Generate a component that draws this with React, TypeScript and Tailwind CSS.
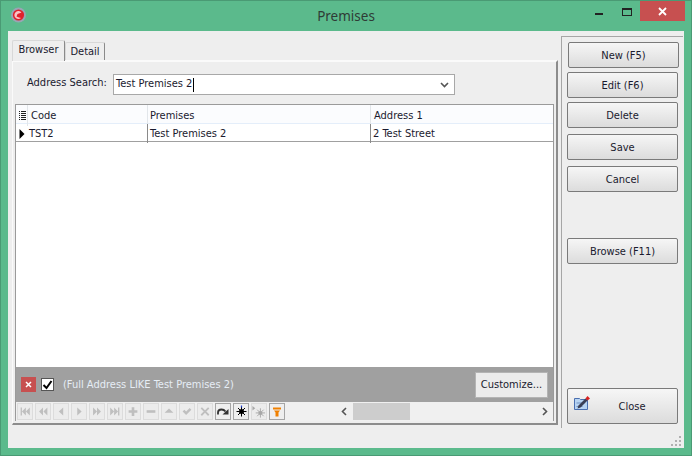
import React from 'react';

const FONT = "font-['DejaVu_Sans_Condensed','Liberation_Sans',sans-serif]";

// Side button, the frame is the same for all of them
const SideButton = ({ label, className = '' }: { label: string; className?: string }) => (
  <div
    className={`flex h-[26px] w-[111px] items-center justify-center rounded-[2px] border border-[#7a7a7a] bg-gradient-to-b from-[#f6f6f6] to-[#dcdcdc] pt-[2px] text-[11px] text-[#1a1a2e] ${className}`}
  >
    {label}
  </div>
);

// Record navigator glyphs, drawn on a 16x17 box
const NAV_ICONS: { d: string }[] = [
  { d: 'M3 4h1.500v9H3z M9 4v9L4.500 8.500z M13.500 4v9L9 8.500z' },
  { d: 'M8 4v9L3.500 8.500z M13 4v9L8.500 8.500z' },
  { d: 'M10.500 4v9L5.500 8.500z' },
  { d: 'M6 4v9l5-4.500z' },
  { d: 'M3.500 4v9L8 8.500z M8 4v9l4.500-4.500z' },
  { d: 'M2.500 4v9L7 8.500z M7 4v9l4.500-4.500z M11.500 4H13v9h-1.500z' },
  { d: 'M6.500 3.500h3v3.500H13v3H9.500v3.500h-3V10H3V7h3.500z' },
  { d: 'M3 7h10v3H3z' },
  { d: 'M8 5l5 5H3z' },
  { d: 'M3 8.500l2-2 2 2 4-4 2 2-6 6z' },
  { d: 'M4.500 3.500L8 7l3.500-3.500 1.500 1.500L9.500 8.500l3.500 3.500-1.500 1.500L8 10l-3.500 3.500L3 12l3.500-3.500L3 5z' },
];

const NavButton = ({ children, active = false }: { children: React.ReactNode; active?: boolean }) => (
  <div
    className={`flex h-[17px] w-[16px] items-center justify-center border ${
      active ? 'border-[#a6a6a6] bg-[#efefef]' : 'border-[#dcdcdc] bg-[#ececec]'
    }`}
  >
    {children}
  </div>
);

export default function App() {
  return (
    <div className={`flex h-[456px] w-[692px] flex-col overflow-hidden border border-[#4a9a74] bg-[#5bba8c] ${FONT}`}>
      {/* Title bar */}
      <div className="relative flex h-[30px] shrink-0 items-center justify-center font-['Noto_Sans',sans-serif] text-[13.5px] text-[#2f3b36]">
        <svg className="absolute left-[9px] top-[6px]" width="17" height="17" viewBox="0 0 17 17">
          <circle cx="8.500" cy="8" r="7.500" fill="#9aa4b4" />
          <circle cx="8.500" cy="8" r="5.600" fill="#e0202c" />
          <path d="M11.500 5.500a4 4 0 1 0-.5 5.500l-2-.5-2.500-1 1-2.500z" fill="#f8c4c4" />
        </svg>
        <span>Premises</span>
        <div className="absolute right-[6px] top-0 flex h-[20px] items-start">
          <div className="mr-[19px] mt-[12px] h-[2px] w-[8px] bg-[#222]" />
          <div className="mr-[8px] mt-[7px] h-[8px] w-[10px] border border-t-[2px] border-[#222]" />
          <div className="flex h-[20px] w-[45px] items-center justify-center bg-[#c75050] text-[#fff]">
            <svg width="9" height="9" viewBox="0 0 9 9">
              <path d="M1 1l7 7M8 1L1 8" stroke="#fff" strokeWidth="1.800" />
            </svg>
          </div>
        </div>
      </div>

      {/* Client area */}
      <div className="relative mx-[7px] flex h-[417px] bg-[#eeeeee] text-[11px] text-[#1a1a2e]">
        {/* Left: tabs and page */}
        <div className="ml-[4px] mt-[9px] flex w-[546px] flex-col">
          <div className="flex h-[20px] items-end">
            <div className="z-10 -mb-[1px] flex h-[21px] w-[53px] items-center justify-center rounded-t-[2px] border border-b-0 border-[#d8d8d8] border-r-[#8a8a8a] bg-[#eeeeee] pb-[2px]">
              Browser
            </div>
            <div className="flex h-[18px] w-[40px] items-center justify-center rounded-t-[2px] border border-b-0 border-[#d8d8d8] border-r-[#8a8a8a] bg-[#eeeeee] pt-[1px]">
              Detail
            </div>
          </div>

          <div className="flex h-[365px] flex-col border-t-2 border-r-2 border-b-2 border-l border-t-[#fafafa] border-r-[#8c8c8c] border-b-[#8c8c8c] border-l-[#fafafa] pl-[2px] pr-[3px]">
            {/* Search row */}
            <div className="mt-[12px] flex h-[21px] items-center">
              <span className="mb-[3px] ml-[12px] w-[86px] whitespace-nowrap">Address Search:</span>
              <div className="flex h-[21px] w-[342px] items-center justify-between border border-[#a8a8a8] bg-white pl-[2px] pr-[5px]">
                <span className="flex items-center">
                  Test Premises 2<span className="ml-[1px] h-[14px] w-[1px] bg-black" />
                </span>
                <svg width="9" height="6" viewBox="0 0 9 6">
                  <path d="M1 1l3.500 3.500L8 1" fill="none" stroke="#555" strokeWidth="1.600" />
                </svg>
              </div>
            </div>

            {/* Grid */}
            <div className="mt-[9px] flex h-[317px] w-[539px] flex-col border border-[#9a9a9a] border-b-0 bg-white">
              <div className="grid h-[19px] shrink-0 grid-cols-[12px_120px_223px_1fr] items-center border-b border-[#e4eefa] bg-[#fbfcfe]">
                <div className="flex h-full items-center justify-center border-r border-[#e2e6ea]">
                  <svg width="8" height="9" viewBox="0 0 8 9">
                    <path d="M1 0h1v1H1zM3 0h5v1H3zM1 2h1v1H1zM3 2h5v1H3zM1 4h1v1H1zM3 4h5v1H3zM1 6h1v1H1zM3 6h5v1H3zM1 8h1v1H1zM3 8h5v1H3z" fill="#222" />
                  </svg>
                </div>
                <div className="h-full border-r border-[#e2e6ea] pl-[3px] leading-[21px]">Code</div>
                <div className="h-full border-r border-[#e2e6ea] pl-[2px] leading-[21px]">Premises</div>
                <div className="h-full pl-[3px] leading-[21px]">Address 1</div>
              </div>
              <div className="grid h-[18px] shrink-0 grid-cols-[12px_120px_223px_1fr] items-center border-b border-[#a0a0a0]">
                <div className="flex h-full items-center justify-center">
                  <svg width="6" height="10" viewBox="0 0 6 10">
                    <path d="M0.500 0v10L5.500 5z" fill="#000" />
                  </svg>
                </div>
                <div className="h-full border-r border-[#8a8a8a] pl-[1px] leading-[19px]">TST2</div>
                <div className="h-full border-r border-[#8a8a8a] pl-[2px] leading-[19px]">Test Premises 2</div>
                <div className="h-full pl-[2px] leading-[19px]">2 Test Street</div>
              </div>
              <div className="flex-1" />

              {/* Filter bar */}
              <div className="flex h-[35px] shrink-0 items-center bg-[#a0a0a0] pl-[5px] pr-[5px]">
                <div className="flex h-[15px] w-[15px] items-center justify-center bg-[#c75050]">
                  <svg width="7" height="7" viewBox="0 0 7 7">
                    <path d="M1 1l5 5M6 1L1 6" stroke="#fff" strokeWidth="1.500" />
                  </svg>
                </div>
                <div className="ml-[5px] flex h-[13px] w-[13px] items-center justify-center border border-[#555] bg-white">
                  <svg width="11" height="10" viewBox="0 0 11 10">
                    <path d="M1.500 5l3 3 5-7" fill="none" stroke="#000" strokeWidth="2" />
                  </svg>
                </div>
                <span className="ml-[9px] pt-[2px] text-[#e6edf5]">(Full Address LIKE Test Premises 2)</span>
                <div className="ml-auto flex h-[26px] w-[73px] items-center justify-center border border-[#b4b4b4] bg-[#ececec] pt-[2px] text-[#1a1a2e]">
                  Customize...
                </div>
              </div>

              {/* Navigator and horizontal scroll */}
              <div className="flex h-[19px] shrink-0 items-center bg-[#f0f0f0] pl-[1px]">
                <div className="flex gap-[2px]">
                  {NAV_ICONS.map((icon, i) => (
                    <NavButton key={i}>
                      <svg width="16" height="17" viewBox="0 0 16 17">
                        <path d={icon.d} fill="#bfbfbf" />
                      </svg>
                    </NavButton>
                  ))}
                  <NavButton active>
                    <svg width="14" height="12" viewBox="0 0 14 12">
                      <path d="M2 8.500V6.500Q2 3.500 5.500 3.500Q8 3.500 9.500 5.500" fill="none" stroke="#333" strokeWidth="1.800" />
                      <path d="M6.500 8.500H12.500V3z" fill="#333" />
                    </svg>
                  </NavButton>
                  <NavButton active>
                    <svg width="13" height="13" viewBox="0 0 13 13">
                      <path d="M6.500 1.500v10M1.500 6.500h10M3 3l7 7M10 3l-7 7" stroke="#000" strokeWidth="1" />
                      <circle cx="6.500" cy="6.500" r="2.500" fill="#000" />
                      <path d="M6.500 0.500v2" stroke="#2040d0" strokeWidth="1.200" />
                    </svg>
                  </NavButton>
                  <NavButton>
                    <svg width="15" height="14" viewBox="0 0 15 14">
                      <path d="M9 3v10M4 8h10M5.500 4.500l7 7M12.500 4.500l-7 7" stroke="#a8a8a8" strokeWidth="1" />
                      <circle cx="9" cy="8" r="2.200" fill="#a8a8a8" />
                      <path d="M0.500 0.500v5L3.500 3z" fill="#a8a8a8" />
                    </svg>
                  </NavButton>
                  <NavButton active>
                    <svg width="10" height="10" viewBox="0 0 10 10">
                      <path d="M1 0.500h8v2H1z" fill="#f08000" />
                      <path d="M2 3.500h6L6.500 5.500V9.500h-3V5.500z" fill="#f08000" />
                    </svg>
                  </NavButton>
                </div>
                <div className="ml-[51px] flex h-[17px] w-[214px] items-center">
                  <svg className="ml-[5px]" width="6" height="9" viewBox="0 0 6 9">
                    <path d="M5 1L1.500 4.500 5 8" fill="none" stroke="#555" strokeWidth="1.600" />
                  </svg>
                  <div className="ml-[6px] h-[17px] w-[57px] bg-[#cdcdcd]" />
                  <svg className="ml-auto mr-[2px]" width="6" height="9" viewBox="0 0 6 9">
                    <path d="M1 1l3.500 3.500L1 8" fill="none" stroke="#555" strokeWidth="1.600" />
                  </svg>
                </div>
              </div>
            </div>
          </div>
        </div>

        {/* Right: button panel */}
        <div className="ml-[3px] mt-[5px] flex h-[392px] w-[122px] flex-col border-t border-l border-[#a6a6a6] pl-[5px] pt-[5px]">
          <SideButton label="New (F5)" className="ml-[1px]" />
          <SideButton label="Edit (F6)" className="mt-[4px]" />
          <SideButton label="Delete" className="mt-[4px]" />
          <SideButton label="Save" className="mt-[6px]" />
          <SideButton label="Cancel" className="mt-[6px]" />
          <SideButton label="Browse (F11)" className="mt-[46px]" />
          <div className="relative mt-[124px] flex h-[36px] w-[111px] items-center justify-center rounded-[2px] border border-[#7a7a7a] bg-gradient-to-b from-[#f6f6f6] to-[#dcdcdc] pl-[19px] pt-[2px]">
            <svg className="absolute left-[6px] top-[6px]" width="16" height="16" viewBox="0 0 16 16">
              <path d="M0.500 3.500h5l1 1h7v10h-13z" fill="#b8d4f2" stroke="#4a6fb0" />
              <path d="M2.500 8h8M2.500 11.500h6" stroke="#6f8fc0" strokeWidth="1" />
              <path d="M3.500 13.500l1-3 7-7 2 2-7 7z" fill="#3a3f55" />
              <path d="M11.500 3.500l2-2.500 2.500 2.500-2.500 2z" fill="#d82020" />
            </svg>
            Close
          </div>
        </div>

        {/* Resize grip */}
        <svg className="absolute bottom-[1px] right-[2px]" width="11" height="11" viewBox="0 0 11 11">
          <path d="M8 0h2v2H8zM4 4h2v2H4zM8 4h2v2H8zM0 8h2v2H0zM4 8h2v2H4zM8 8h2v2H8z" fill="#b0b0b0" />
        </svg>
      </div>
    </div>
  );
}
